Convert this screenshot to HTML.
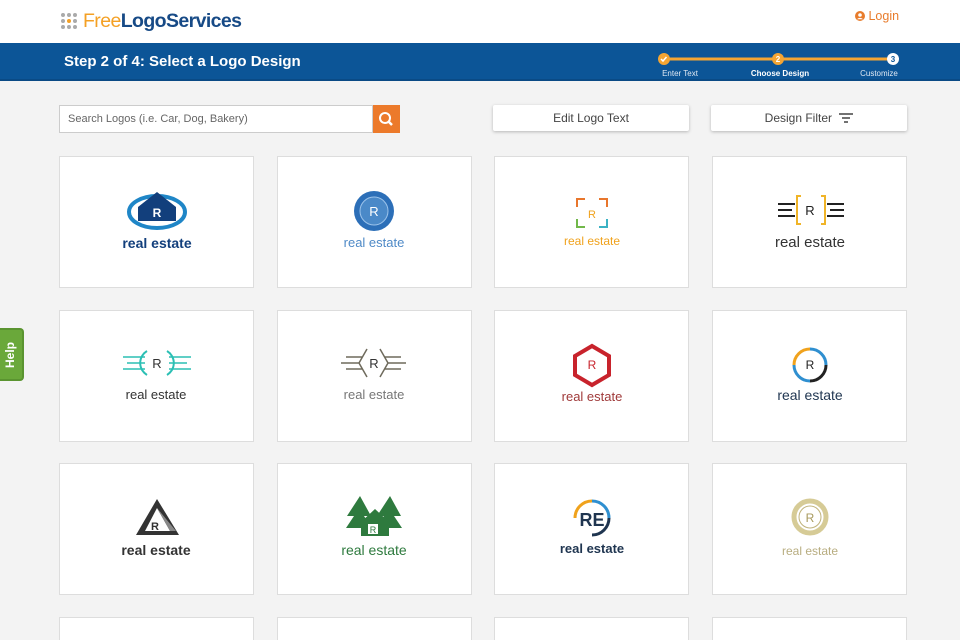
<!DOCTYPE html>
<html style="width:960px;height:640px;overflow:hidden"><head><meta charset="utf-8"><style>
*{box-sizing:border-box;margin:0;padding:0}
body{width:960px;height:640px;overflow:hidden;background:#f3f3f3;font-family:"Liberation Sans",sans-serif;position:relative}
.hdr{height:43px;background:#fff;position:relative}
.logo{position:absolute;left:83px;top:10px;font-size:19.5px;font-weight:bold;letter-spacing:-0.6px}
.dots{position:absolute;left:60px;top:12px;width:20px;height:18px}
.bar{position:absolute;top:43px;left:0;width:960px;height:38px;background:#0c5597;border-bottom:2px solid #0a4a85}
.bar h1{position:absolute;left:64px;top:10px;color:#fff;font-size:15px;font-weight:bold}
.login{position:absolute;left:855px;top:9px;color:#e87c2c;font-size:12.5px}
.search{position:absolute;left:59px;top:105px;width:314px;height:28px;background:#fff;border:1px solid #ccc;font-size:11px;color:#666;padding:7px 8px}
.sbtn{position:absolute;left:373px;top:105px;width:27px;height:28px;background:#ec7a2b}
.btn{position:absolute;top:105px;width:196px;height:26px;background:#fff;box-shadow:0 1px 3px rgba(0,0,0,.25);font-size:12px;color:#444;text-align:center;line-height:26px;border-radius:2px}
.card{position:absolute;width:195px;height:132px;background:#fff;border:1px solid #ddd}
.card svg{position:absolute;left:0;top:0}
.help{position:absolute;left:0;top:328px;width:24px;height:53px;background:#6aa83a;border:2px solid #5a9430;border-left:none;border-radius:0 4px 4px 0}
.help span{position:absolute;left:3px;top:38px;transform:rotate(-90deg);transform-origin:0 0;color:#fff;font-size:12px;font-weight:bold}
</style></head><body>
<div class="hdr">
<svg class="dots" viewBox="0 0 20 18"><g fill="#aaa"><circle cx="3" cy="3" r="2"/><circle cx="9" cy="3" r="2"/><circle cx="15" cy="3" r="2"/><circle cx="3" cy="9" r="2"/><circle cx="15" cy="9" r="2"/><circle cx="3" cy="15" r="2"/><circle cx="9" cy="15" r="2"/><circle cx="15" cy="15" r="2"/></g><circle cx="9" cy="9" r="2" fill="#f4a024"/></svg>
<div class="logo"><span style="color:#f4a024;font-weight:normal">Free</span><span style="color:#174a86">LogoServices</span></div>
<div class="login"><svg width="10" height="10" viewBox="0 0 10 10" style="vertical-align:-1px"><circle cx="5" cy="5" r="5" fill="#e87c2c"/><circle cx="5" cy="4" r="1.8" fill="#fff"/><path d="M2 8.3a3.5 3 0 0 1 6 0" fill="#fff"/></svg> Login</div>
</div>
<div class="bar"><h1>Step 2 of 4: Select a Logo Design</h1>
<svg width="300" height="38" style="position:absolute;left:650px;top:0">
<line x1="14" y1="16" x2="243" y2="16" stroke="#f4a533" stroke-width="3"/>
<circle cx="14" cy="16" r="6" fill="#f4a533"/><path d="M11 16l2 2 3.5-4" stroke="#fff" stroke-width="1.5" fill="none"/>
<circle cx="128" cy="16" r="6" fill="#f4a533"/><text x="128" y="19" font-size="8" fill="#fff" text-anchor="middle" font-weight="bold">2</text>
<circle cx="243" cy="16" r="6" fill="#fff"/><text x="243" y="19" font-size="8" fill="#0c5597" text-anchor="middle" font-weight="bold">3</text>
<text x="30" y="33" font-size="8" fill="#dfe8f3" text-anchor="middle">Enter Text</text>
<text x="130" y="33" font-size="8" fill="#fff" text-anchor="middle" font-weight="bold">Choose Design</text>
<text x="229" y="33" font-size="8" fill="#dfe8f3" text-anchor="middle">Customize</text>
</svg></div>
<div class="search">Search Logos (i.e. Car, Dog, Bakery)</div>
<div class="sbtn"><svg width="27" height="28"><circle cx="12" cy="13" r="5" stroke="#fff" stroke-width="2" fill="none"/><line x1="15.5" y1="16.5" x2="19" y2="20" stroke="#fff" stroke-width="2.5"/></svg></div>
<div class="btn" style="left:493px">Edit Logo Text</div>
<div class="btn" style="left:711px">Design Filter <svg width="14" height="10" style="vertical-align:-1px;margin-left:4px"><path d="M0 1h14M3 5h8M5 9h4" stroke="#444" stroke-width="1.4"/></svg></div>

<div class="card" style="left:59px;top:156px"><svg width="195" height="132"><ellipse cx="97" cy="55" rx="28" ry="16" fill="none" stroke="#1f86c7" stroke-width="4"/><path d="M78 50l19-15 19 15v14H78z" fill="#123f7c"/><text x="97" y="60" font-size="12" font-weight="bold" fill="#fff" text-anchor="middle">R</text><text x="97" y="91" font-size="14" font-weight="bold" fill="#123f7c" text-anchor="middle">real estate</text></svg></div>
<div class="card" style="left:277px;top:156px"><svg width="195" height="132"><circle cx="96" cy="54" r="20" fill="#2c6fb8"/><circle cx="96" cy="54" r="14" fill="#4a89c8" stroke="#9cc3ea"/><text x="96" y="59" font-size="13" fill="#fff" text-anchor="middle">R</text><text x="96" y="90" font-size="13" fill="#4f8ac7" text-anchor="middle">real estate</text></svg></div>
<div class="card" style="left:494px;top:156px"><svg width="195" height="132"><path d="M82 50v-8h8M104 42h8v8M112 62v8h-8M90 70h-8v-8" stroke="#e8762c" stroke-width="2" fill="none"/><path d="M104 70h8v-8" stroke="#3bb2c4" stroke-width="2" fill="none"/><path d="M82 62v8h8" stroke="#71b84a" stroke-width="2" fill="none"/><text x="97" y="61" font-size="11" fill="#f0a21c" text-anchor="middle">R</text><text x="97" y="88" font-size="12" fill="#f0a21c" text-anchor="middle">real estate</text></svg></div>
<div class="card" style="left:712px;top:156px"><svg width="195" height="132"><path d="M65 47h17M65 53h14M65 59h17M114 47h17M117 53h14M114 59h17" stroke="#222" stroke-width="2"/><path d="M88 39h-4v28h4M108 39h4v28h-4" stroke="#f0b428" stroke-width="2" fill="none"/><text x="97" y="58" font-size="13" fill="#222" text-anchor="middle">R</text><text x="97" y="90" font-size="15" fill="#333" text-anchor="middle">real estate</text></svg></div>

<div class="card" style="left:59px;top:310px"><svg width="195" height="132"><path d="M63 46h22M67 52h18M63 58h22M109 46h22M109 52h18M109 58h22" stroke="#2bbfb4" stroke-width="1.5"/><path d="M87 40a14 14 0 0 0 0 24M107 40a14 14 0 0 1 0 24" stroke="#2bbfb4" stroke-width="2" fill="none"/><text x="97" y="57" font-size="13" fill="#333" text-anchor="middle">R</text><text x="96" y="88" font-size="13" fill="#333" text-anchor="middle">real estate</text></svg></div>
<div class="card" style="left:277px;top:310px"><svg width="195" height="132"><path d="M63 52h18M110 52h18M81 52l8-14M81 52l8 14M110 52l-8-14M110 52l-8 14M68 46h16M68 58h16M107 46h16M107 58h16" stroke="#6e6a5c" stroke-width="1.5" fill="none"/><text x="96" y="57" font-size="13" fill="#333" text-anchor="middle">R</text><text x="96" y="88" font-size="13" fill="#777" text-anchor="middle">real estate</text></svg></div>
<div class="card" style="left:494px;top:310px"><svg width="195" height="132"><path d="M97 35l17 10v19l-17 10-17-10V45z" fill="none" stroke="#c8232c" stroke-width="4"/><text x="97" y="58" font-size="12" fill="#c8232c" text-anchor="middle">R</text><text x="97" y="90" font-size="13" fill="#a03a3a" text-anchor="middle">real estate</text></svg></div>
<div class="card" style="left:712px;top:310px"><svg width="195" height="132"><path d="M97 38a16 16 0 0 1 16 16" stroke="#2f8fd0" stroke-width="3" fill="none"/><path d="M113 54a16 16 0 0 1-16 16" stroke="#222" stroke-width="3" fill="none"/><path d="M97 70a16 16 0 0 1-16-16" stroke="#2f8fd0" stroke-width="3" fill="none"/><path d="M81 54a16 16 0 0 1 16-16" stroke="#f0a21c" stroke-width="3" fill="none"/><text x="97" y="58" font-size="12" fill="#222" text-anchor="middle">R</text><text x="97" y="89" font-size="14" fill="#1f3550" text-anchor="middle">real estate</text></svg></div>

<div class="card" style="left:59px;top:463px"><svg width="195" height="132"><path d="M97 35l22 36H76z" fill="#333"/><path d="M97 44l13 23H85z" fill="#fff"/><path d="M97 44l13 23h6z" fill="#888"/><text x="95" y="66" font-size="11" font-weight="bold" fill="#333" text-anchor="middle">R</text><text x="96" y="91" font-size="14" font-weight="bold" fill="#333" text-anchor="middle">real estate</text></svg></div>
<div class="card" style="left:277px;top:463px"><svg width="195" height="132"><path d="M82 32l-13 20h7l-8 12h26l-8-12h7zM112 32l-13 20h7l-8 12h26l-8-12h7zM97 45l-14 13v14h28V58z" fill="#2e7a3e"/><rect x="90" y="60" width="10" height="10" fill="#fff"/><text x="95" y="69" font-size="9" fill="#2e7a3e" text-anchor="middle">R</text><text x="96" y="91" font-size="14" fill="#2e7a3e" text-anchor="middle">real estate</text></svg></div>
<div class="card" style="left:494px;top:463px"><svg width="195" height="132"><path d="M97 37a17 17 0 0 1 17 17" stroke="#2f8fd0" stroke-width="3" fill="none"/><path d="M114 54a17 17 0 0 1-17 17" stroke="#1f3550" stroke-width="3" fill="none"/><path d="M80 54a17 17 0 0 1 17-17" stroke="#f0a21c" stroke-width="3" fill="none"/><text x="97" y="62" font-size="18" font-weight="bold" fill="#1f3550" text-anchor="middle">RE</text><text x="97" y="89" font-size="13" font-weight="bold" fill="#1f3550" text-anchor="middle">real estate</text></svg></div>
<div class="card" style="left:712px;top:463px"><svg width="195" height="132"><circle cx="97" cy="53" r="16" fill="none" stroke="#d6cb96" stroke-width="5"/><circle cx="97" cy="53" r="11" fill="#fff" stroke="#bfb27a"/><text x="97" y="58" font-size="12" fill="#a89a5e" text-anchor="middle">R</text><text x="97" y="91" font-size="12" fill="#b8ad80" text-anchor="middle">real estate</text></svg></div>

<div class="card" style="left:59px;top:617px"></div>
<div class="card" style="left:277px;top:617px"></div>
<div class="card" style="left:494px;top:617px"></div>
<div class="card" style="left:712px;top:617px"></div>
<div class="help"><span>Help</span></div>
</body></html>
